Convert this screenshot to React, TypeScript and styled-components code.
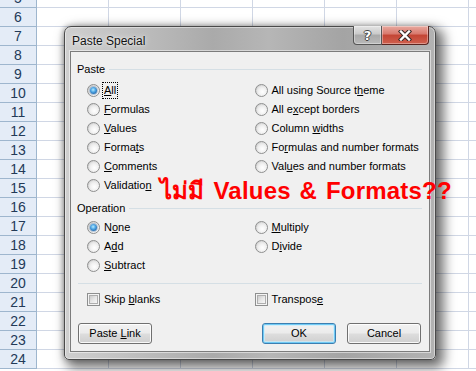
import React from 'react';
import styled, { createGlobalStyle } from 'styled-components';

const Global = createGlobalStyle`
  html, body { margin: 0; padding: 0; width: 476px; height: 371px; overflow: hidden; background: #fff; }
  #root { position: relative; width: 476px; height: 371px; overflow: hidden; }
`;

const Sheet = styled.div`
  display: flex;
  flex-direction: column;
  margin-top: -11px;
`;

const SheetRow = styled.div`
  display: flex;
  height: 19px;
  flex: none;
`;

const RowHead = styled.div`
  width: 37px;
  flex: none;
  box-sizing: border-box;
  border-right: 1px solid #9eb6ce;
  border-bottom: 1px solid #9eb6ce;
  background: #e4ecf7;
  color: #233a57;
  font: 14px/18px "Liberation Sans", Arial, sans-serif;
  text-align: center;
`;

const Cell = styled.div`
  width: 72px;
  flex: none;
  box-sizing: border-box;
  border-right: 1px solid #d0d7e5;
  border-bottom: 1px solid #d0d7e5;
  background: #fff;
`;

const Window = styled.div`
  position: absolute;
  left: 64px;
  top: 26px;
  width: 372px;
  height: 334px;
  box-sizing: border-box;
  display: flex;
  flex-direction: column;
  padding: 0 5px 8px 5px;
  border: 1px solid #4a4a4a;
  border-radius: 7px 7px 5px 5px;
  background: linear-gradient(
    to right,
    #cfcfcf 0%,
    #c2c2c2 15%,
    #aaaaaa 40%,
    #b6b6b6 55%,
    #a4a4a4 75%,
    #b2b2b2 100%
  );
  box-shadow: inset 0 0 0 1px rgba(255, 255, 255, 0.45), 5px 5px 12px 3px rgba(0, 0, 0, 0.55),
    -1px 0 5px rgba(0, 0, 0, 0.25);
  font-family: "Liberation Sans", Arial, sans-serif;
`;

const TitleBar = styled.div`
  display: flex;
  align-items: flex-start;
  height: 24px;
  flex: none;
`;

const TitleText = styled.div`
  padding: 6px 0 0 2px;
  font-size: 12px;
  line-height: 16px;
  color: #111;
  text-shadow: 0 0 6px rgba(255, 255, 255, 0.9), 0 0 2px rgba(255, 255, 255, 0.8);
`;

const CaptionButtons = styled.div`
  display: flex;
  margin: -1px 1px 0 auto;
`;

const CaptionButton = styled.div<{ $kind: 'help' | 'close' }>`
  box-sizing: border-box;
  height: 19px;
  width: ${(p) => (p.$kind === 'help' ? '29px' : '47px')};
  display: flex;
  align-items: center;
  justify-content: center;
  border: 1px solid ${(p) => (p.$kind === 'help' ? '#565656' : '#5a2520')};
  border-top: none;
  border-left-width: ${(p) => (p.$kind === 'help' ? '1px' : '0')};
  border-radius: ${(p) => (p.$kind === 'help' ? '0 0 0 4px' : '0 0 4px 0')};
  background: ${(p) =>
    p.$kind === 'help'
      ? 'linear-gradient(#e4e4e4 0%, #c9c9c9 45%, #a9a9a9 50%, #b9b9b9 100%)'
      : 'linear-gradient(#e8a99f 0%, #d8786c 45%, #c34534 50%, #d0604e 100%)'};
  box-shadow: inset 0 0 0 1px rgba(255, 255, 255, 0.35);
`;

const HelpGlyph = styled.span`
  font: bold 13px/13px "DejaVu Sans", sans-serif;
  color: #fff;
  text-shadow: 1px 0 0 #444, -1px 0 0 #444, 0 1px 0 #444, 0 -1px 0 #444;
`;

const Client = styled.div`
  flex: 1;
  display: flex;
  flex-direction: column;
  padding: 0 7px 7px 6px;
  border: 1px solid #7c7c7c;
  background: #f0f0f0;
  box-shadow: 0 0 0 1px rgba(255, 255, 255, 0.5);
  font-size: 11px;
  color: #000;
`;

const GroupHeader = styled.div<{ $top: number }>`
  display: flex;
  align-items: center;
  gap: 4px;
  height: 14px;
  margin-top: ${(p) => p.$top}px;
  flex: none;
`;

const GroupTitle = styled.span`
  line-height: 13px;
`;

const Rule = styled.div`
  flex: 1;
  height: 1px;
  background: #d5dfe5;
`;

const Divider = styled.div<{ $top: number }>`
  height: 1px;
  background: #d5dfe5;
  margin: ${(p) => p.$top}px 0 0 1px;
  flex: none;
`;

const Columns = styled.div<{ $top: number }>`
  display: flex;
  padding-left: 10px;
  margin-top: ${(p) => p.$top}px;
  flex: none;
`;

const Column = styled.div`
  display: flex;
  flex-direction: column;
  width: 172px;
`;

const Option = styled.div`
  display: flex;
  align-items: center;
  gap: 4px;
  height: 19px;
`;

const OptionText = styled.span<{ $focus?: boolean }>`
  line-height: 13px;
  white-space: pre;
  outline: ${(p) => (p.$focus ? '1px dotted #000' : 'none')};
  outline-offset: 1px;
`;

const Key = styled.span`
  text-decoration: underline;
`;

const RadioMark = styled.span<{ $on?: boolean }>`
  position: relative;
  width: 13px;
  height: 13px;
  flex: none;
  box-sizing: border-box;
  border-radius: 50%;
  border: 1px solid #8e8f8f;
  background: linear-gradient(135deg, #c9c9c9 0%, #e9e9e9 55%, #fbfbfb 100%);
  &::before {
    content: '';
    position: absolute;
    inset: 1px;
    border-radius: 50%;
    background: radial-gradient(circle at 60% 65%, #ffffff 0%, #f2f2f2 45%, #d8d8d8 100%);
  }
  &::after {
    content: '';
    position: absolute;
    inset: 2px;
    border-radius: 50%;
    display: ${(p) => (p.$on ? 'block' : 'none')};
    background: radial-gradient(circle at 45% 40%, #b6ecff 0%, #4fa6e4 40%, #1a5a9e 85%, #174a80 100%);
    box-shadow: 0 0 0 1px rgba(60, 110, 160, 0.35);
  }
`;

const CheckMark = styled.span`
  position: relative;
  width: 13px;
  height: 13px;
  flex: none;
  box-sizing: border-box;
  border: 1px solid #8e8f8f;
  background: #f4f4f4;
  &::after {
    content: '';
    position: absolute;
    inset: 1px;
    border: 1px solid #aeaeae;
    background: linear-gradient(135deg, #cbcbcb 0%, #e6e6e6 50%, #f8f8f8 100%);
  }
`;

const ButtonRow = styled.div`
  display: flex;
  align-items: center;
  margin-top: 14px;
  padding-left: 1px;
  flex: none;
`;

const ButtonGroup = styled.div`
  display: flex;
  gap: 11px;
  margin-left: auto;
  margin-right: 1px;
`;

const PushButton = styled.div<{ $default?: boolean }>`
  box-sizing: border-box;
  width: 74px;
  height: 21px;
  display: flex;
  align-items: center;
  justify-content: center;
  border: 1px solid ${(p) => (p.$default ? '#3c7fb1' : '#707070')};
  border-radius: 3px;
  background: linear-gradient(#f2f2f2 0%, #ebebeb 48%, #dddddd 52%, #cfcfcf 100%);
  box-shadow: ${(p) =>
    p.$default
      ? 'inset 0 0 0 1px #6fcaf5, inset 0 0 0 2px rgba(200, 236, 252, 0.7)'
      : 'inset 0 0 0 1px rgba(255, 255, 255, 0.85)'};
`;

const ButtonText = styled.span`
  line-height: 13px;
  white-space: pre;
`;

const Annotation = styled.div`
  position: absolute;
  left: 160px;
  top: 177px;
  font: bold 24px/27px "Liberation Sans", Arial, sans-serif;
  word-spacing: 2px;
  letter-spacing: 0.2px;
  color: #ff0000;
  white-space: nowrap;
`;

function Label({ text, k }: { text: string; k?: number }) {
  if (k === undefined || k < 0) return <>{text}</>;
  return (
    <>
      {text.slice(0, k)}
      <Key>{text[k]}</Key>
      {text.slice(k + 1)}
    </>
  );
}

type Opt = { text: string; k?: number; on?: boolean; focus?: boolean };

function Radio({ text, k, on, focus }: Opt) {
  return (
    <Option>
      <RadioMark $on={on} />
      <OptionText $focus={focus}>
        <Label text={text} k={k} />
      </OptionText>
    </Option>
  );
}

function Check({ text, k }: Opt) {
  return (
    <Option>
      <CheckMark />
      <OptionText>
        <Label text={text} k={k} />
      </OptionText>
    </Option>
  );
}

const pasteLeft: Opt[] = [
  { text: 'All', k: 0, on: true, focus: true },
  { text: 'Formulas', k: 0 },
  { text: 'Values', k: 0 },
  { text: 'Formats', k: 5 },
  { text: 'Comments', k: 0 },
  { text: 'Validation', k: 9 },
];
const pasteRight: Opt[] = [
  { text: 'All using Source theme', k: 18 },
  { text: 'All except borders', k: 5 },
  { text: 'Column widths', k: 7 },
  { text: 'Formulas and number formats', k: 2 },
  { text: 'Values and number formats', k: 3 },
];
const opLeft: Opt[] = [
  { text: 'None', k: 1, on: true },
  { text: 'Add', k: 1 },
  { text: 'Subtract', k: 0 },
];
const opRight: Opt[] = [
  { text: 'Multiply', k: 0 },
  { text: 'Divide', k: 1 },
];

const rows = Array.from({ length: 20 }, (_, i) => i + 5);
const cols = Array.from({ length: 7 }, (_, i) => i);

export default function App() {
  return (
    <>
      <Global />
      <Sheet>
        {rows.map((r) => (
          <SheetRow key={r}>
            <RowHead>{r}</RowHead>
            {cols.map((c) => (
              <Cell key={c} />
            ))}
          </SheetRow>
        ))}
      </Sheet>

      <Window>
        <TitleBar>
          <TitleText>Paste Special</TitleText>
          <CaptionButtons>
            <CaptionButton $kind="help">
              <HelpGlyph>?</HelpGlyph>
            </CaptionButton>
            <CaptionButton $kind="close">
              <svg width="14" height="11" viewBox="0 0 14 11">
                <path d="M3 1.5 L11 9.5 M11 1.5 L3 9.5" stroke="#3a2a28" strokeWidth="4.4" strokeLinecap="square" fill="none" />
                <path d="M3 1.5 L11 9.5 M11 1.5 L3 9.5" stroke="#ffffff" strokeWidth="2.4" strokeLinecap="square" fill="none" />
              </svg>
            </CaptionButton>
          </CaptionButtons>
        </TitleBar>

        <Client>
          <GroupHeader $top={10}>
            <GroupTitle>Paste</GroupTitle>
            <Rule />
          </GroupHeader>
          <Columns $top={5}>
            <Column>
              {pasteLeft.map((o) => (
                <Radio key={o.text} {...o} />
              ))}
            </Column>
            <Column>
              {pasteRight.map((o) => (
                <Radio key={o.text} {...o} />
              ))}
            </Column>
          </Columns>

          <GroupHeader $top={6}>
            <GroupTitle>Operation</GroupTitle>
            <Rule />
          </GroupHeader>
          <Columns $top={3}>
            <Column>
              {opLeft.map((o) => (
                <Radio key={o.text} {...o} />
              ))}
            </Column>
            <Column>
              {opRight.map((o) => (
                <Radio key={o.text} {...o} />
              ))}
            </Column>
          </Columns>

          <Divider $top={8} />

          <Columns $top={6}>
            <Column>
              <Check text="Skip blanks" k={5} />
            </Column>
            <Column>
              <Check text="Transpose" k={8} />
            </Column>
          </Columns>

          <ButtonRow>
            <PushButton>
              <ButtonText>
                <Label text="Paste Link" k={6} />
              </ButtonText>
            </PushButton>
            <ButtonGroup>
              <PushButton $default>
                <ButtonText>OK</ButtonText>
              </PushButton>
              <PushButton>
                <ButtonText>Cancel</ButtonText>
              </PushButton>
            </ButtonGroup>
          </ButtonRow>
        </Client>
      </Window>

      <Annotation>ไม่มี Values &amp; Formats??</Annotation>
    </>
  );
}
